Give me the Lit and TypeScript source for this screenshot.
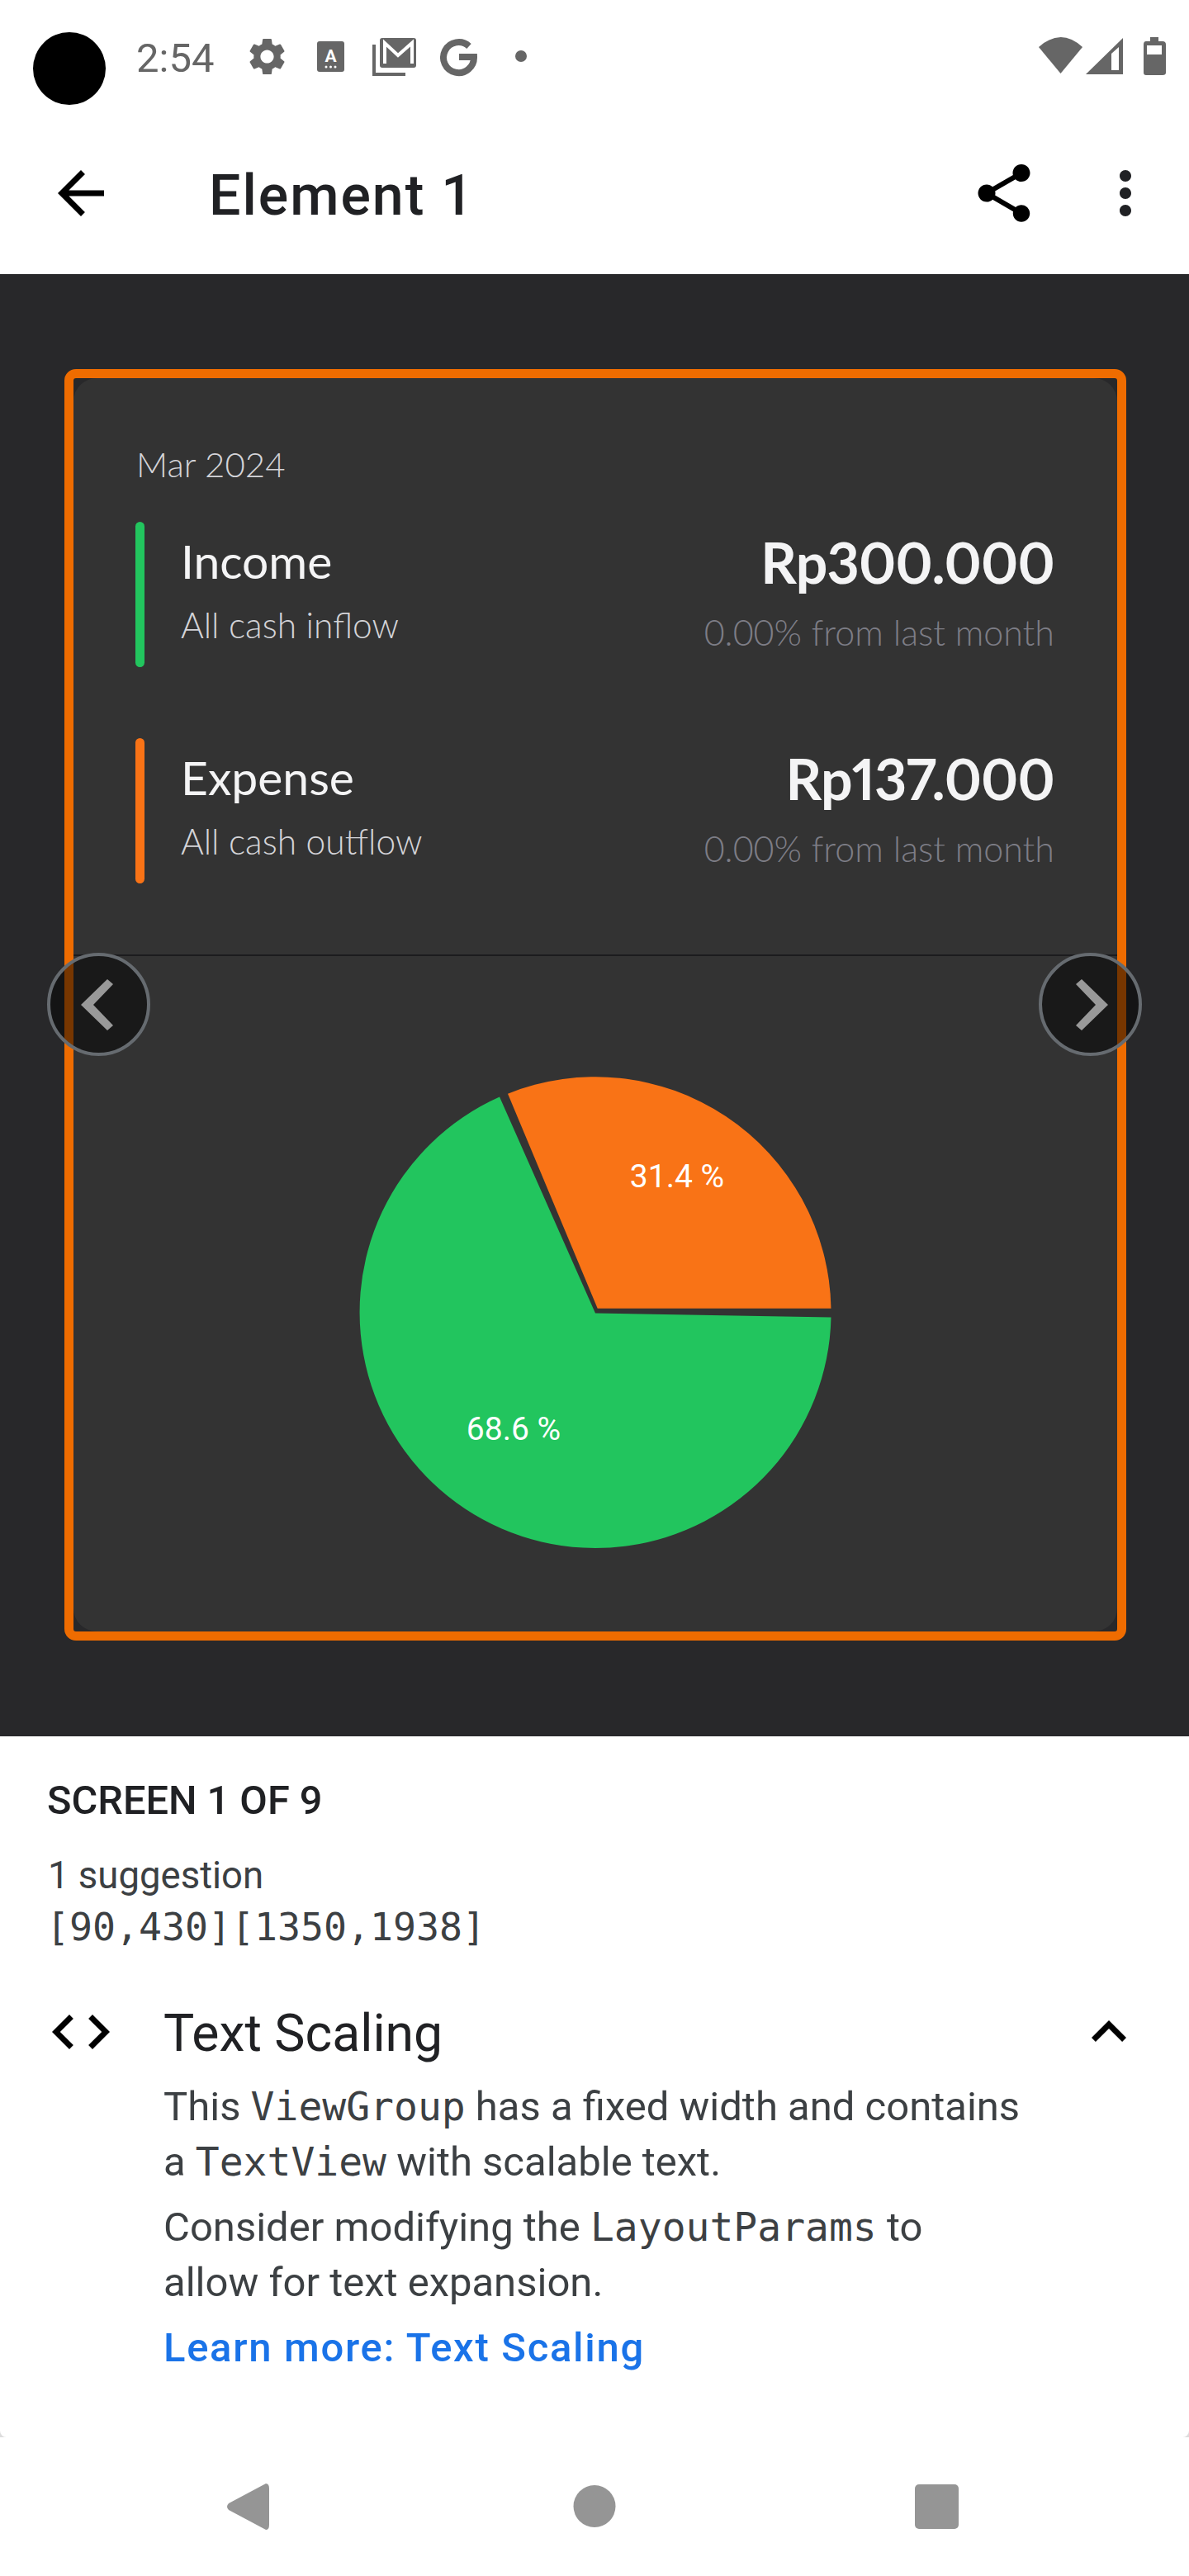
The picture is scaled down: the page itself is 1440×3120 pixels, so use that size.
import { LitElement, html, css, svg } from 'lit';
import { customElement } from 'lit/decorators.js';

const icon = (d: string, cls = '') => html`<svg class="icon ${cls}" viewBox="0 0 24 24"><path d="${d}"></path></svg>`;

const GEAR = 'M19.14 12.94c.04-.3.06-.61.06-.94 0-.32-.02-.64-.07-.94l2.03-1.58c.18-.14.23-.41.12-.61l-1.92-3.32c-.12-.22-.37-.29-.59-.22l-2.39.96c-.5-.38-1.03-.7-1.62-.94l-.36-2.54c-.04-.24-.24-.41-.48-.41h-3.84c-.24 0-.43.17-.47.41l-.36 2.54c-.59.24-1.13.57-1.62.94l-2.39-.96c-.22-.08-.47 0-.59.22L2.74 8.87c-.12.21-.08.47.12.61l2.03 1.58c-.05.3-.09.63-.09.94s.02.64.07.94l-2.03 1.58c-.18.14-.23.41-.12.61l1.92 3.32c.12.22.37.29.59.22l2.39-.96c.5.38 1.03.7 1.62.94l.36 2.54c.05.24.24.41.48.41h3.84c.24 0 .44-.17.47-.41l.36-2.54c.59-.24 1.13-.56 1.62-.94l2.39.96c.22.08.47 0 .59-.22l1.92-3.32c.12-.22.07-.47-.12-.61l-2.01-1.58zM12 15.6c-1.98 0-3.6-1.62-3.6-3.6s1.62-3.6 3.6-3.6 3.6 1.62 3.6 3.6-1.62 3.6-3.6 3.6z';
const BACK = 'M20 11H7.83l5.59-5.59L12 4l-8 8 8 8 1.41-1.41L7.83 13H20v-2z';
const SHARE = 'M18 16.08c-.76 0-1.44.3-1.96.77L8.91 12.7c.05-.23.09-.46.09-.7s-.04-.47-.09-.7l7.05-4.11c.54.5 1.25.81 2.04.81 1.66 0 3-1.34 3-3s-1.34-3-3-3-3 1.34-3 3c0 .24.04.47.09.7L8.04 9.81C7.5 9.31 6.79 9 6 9c-1.66 0-3 1.34-3 3s1.34 3 3 3c.79 0 1.5-.31 2.04-.81l7.12 4.16c-.05.21-.08.43-.08.65 0 1.61 1.31 2.92 2.92 2.92 1.61 0 2.92-1.31 2.92-2.92s-1.31-2.92-2.92-2.92z';
const MORE = 'M12 8c1.1 0 2-.9 2-2s-.9-2-2-2-2 .9-2 2 .9 2 2 2zm0 2c-1.1 0-2 .9-2 2s.9 2 2 2 2-.9 2-2-.9-2-2-2zm0 6c-1.1 0-2 .9-2 2s.9 2 2 2 2-.9 2-2-.9-2-2-2z';
const CODE = 'M9.4 16.6L4.8 12l4.6-4.6L8 6l-6 6 6 6 1.4-1.4zm5.2 0l4.6-4.6-4.6-4.6L16 6l6 6-6 6-1.4-1.4z';
const LESS = 'M12 8l-6 6 1.41 1.41L12 10.83l4.59 4.58L18 14z';

@customElement('app-root')
export class AppRoot extends LitElement {
  static styles = css`
    :host {
      display: block;
      width: 1440px;
      height: 3120px;
      background: #dcdcdc;
      font-family: Roboto, sans-serif;
      overflow: hidden;
    }
    .icon { display: block; width: 84px; height: 84px; fill: currentColor; flex: none; }

    .status { height: 166px; display: flex; align-items: flex-start; box-sizing: border-box; padding: 39px 28px 0 40px; color: #666; background: #fff; }
    .cam { width: 88px; height: 88px; border-radius: 50%; background: #000; flex: none; }
    .time { font-size: 49px; line-height: 56px; margin: 4px 0 0 37px; width: 93px; flex: none; }
    .status svg { flex: none; display: block; }
    .status-left { width: 340px; height: 48px; margin: 6px 0 0 44px; }
    .status-right { width: 154px; height: 48px; margin: 6px 0 0 auto; }

    .bar { height: 166px; display: flex; align-items: flex-start; box-sizing: border-box; padding: 26px 35px 0 56px; color: #000; background: #fff; }
    .title { font-size: 68px; font-weight: 500; line-height: 84px; letter-spacing: 2px; color: #202124; margin: 3px 0 0 113px; flex: 1; }
    .share { margin-right: 63px; }
    .more { color: #202124; }

    .canvas { height: 1771px; background: #28282a; box-sizing: border-box; padding: 115px 76px 0 78px; position: relative; }
    .frame { border: 11px solid #ef6c00; border-radius: 14px; height: 1540px; box-sizing: border-box; }
    .card { height: 100%; background: #333; border-radius: 28px; box-sizing: border-box; padding-top: 79px; color: #f4f4f5; font-family: Lato, sans-serif; overflow: hidden; }
    .month { margin-left: 76px; font-size: 42px; font-weight: 300; line-height: 50px; color: #d4d4d8; }
    .rows { display: flex; flex-direction: column; gap: 86px; margin: 45px 76px 0 75px; }
    .row { display: flex; height: 176px; }
    .stripe { width: 11px; border-radius: 6px; flex: none; }
    .green { background: #22c55e; }
    .orange { background: #f97316; }
    .names { margin-left: 44px; flex: 1; }
    .name { font-size: 57px; line-height: 68px; margin-top: 13px; }
    .sub { font-size: 42.5px; font-weight: 300; line-height: 50px; margin-top: 19px; color: #d4d4d8; }
    .right { text-align: right; }
    .amount { font-size: 68px; font-weight: 700; line-height: 80px; letter-spacing: -0.8px; margin-top: 9px; font-variant-numeric: proportional-nums; }
    .change { font-size: 43px; font-weight: 300; line-height: 50px; margin-top: 20px; color: #7d7d86; }
    .divider { height: 2px; background: #1c1c1e; margin-top: 86px; }
    .pie { display: block; width: 1265px; height: 800px; }
    .pie text { font-family: Roboto, sans-serif; font-size: 39px; fill: #fff; }

    .nav-btn { position: absolute; top: 822px; width: 125px; height: 125px; box-sizing: border-box; border-radius: 50%; border: 4px solid #666b70; background: rgba(0, 0, 0, 0.5); }
    .nav-btn svg { display: block; width: 117px; height: 117px; fill: #999; }
    .prev { left: 57px; }
    .next { left: 1258px; }

    .sheet { height: 849px; box-sizing: border-box; padding: 50px 0 0 58px; border-radius: 0 0 8px 8px; background: #fff; }
    .screen { font-size: 48.7px; line-height: 56px; font-weight: 500; color: #202124; margin-left: -1px; }
    .count { font-size: 45.5px; line-height: 54px; color: #3c4043; margin-top: 36px; }
    .bounds { font-family: 'DejaVu Sans Mono', monospace; font-size: 46.5px; line-height: 58px; color: #3c4043; margin: 6px 0 0 -2px; }
    .finding { display: flex; margin: 56px 0 0 -2px; }
    .finding .code { color: #000; }
    .detail { margin-left: 58px; width: 1040px; }
    .name2 { font-size: 62.5px; line-height: 84px; margin: 2px 0 13px; color: #202124; }
    .detail p { margin: 0 0 12px; font-size: 49px; color: #3c4043; }
    .line { display: block; height: 67px; line-height: 67px; white-space: nowrap; }
    .detail code { font-family: 'DejaVu Sans Mono', monospace; font-size: 48px; line-height: 1; }
    .learn { font-size: 49px; line-height: 67px; letter-spacing: 1.7px; font-weight: 500; color: #1a73e8; text-decoration: none; display: block; }
    .toggle { margin-left: 63px; color: #000; }

    .softkeys { height: 168px; display: block; width: 1440px; background: #fff; }
  `;

  private renderRow(name: string, sub: string, amount: string, color: string) {
    return html`
      <div class="row">
        <div class="stripe ${color}"></div>
        <div class="names">
          <div class="name">${name}</div>
          <div class="sub">${sub}</div>
        </div>
        <div class="right">
          <div class="amount">${amount}</div>
          <div class="change">0.00% from last month</div>
        </div>
      </div>
    `;
  }

  render() {
    return html`
      <div class="status">
        <div class="cam"></div>
        <div class="time">2:54</div>
        <svg class="status-left" viewBox="0 0 340 48" fill="#666">
          <svg x="-5.500" y="-3.500" width="54" height="54" viewBox="0 0 24 24"><path d="${GEAR}"></path></svg>
          <rect x="82" y="5" width="33" height="37" rx="3"></rect>
          <text x="98.500" y="30" text-anchor="middle" font-family="Roboto" font-weight="700" font-size="21" fill="#fff">A</text>
          <g fill="#fff"><circle cx="93" cy="36" r="1.500"></circle><circle cx="98.500" cy="36" r="1.500"></circle><circle cx="104" cy="36" r="1.500"></circle></g>
          <path d="M149 9h4v34h36v4h-40z"></path>
          <rect x="158" y="1" width="44" height="36" rx="3"></rect>
          <path d="M164 32V7l16 15 17-15v25" fill="none" stroke="#fff" stroke-width="4"></path>
          <path d="M266 11A18.500 18.500 0 1 0 272 24H254" fill="none" stroke="#666" stroke-width="8"></path>
          <circle cx="329" cy="23" r="7"></circle>
        </svg>
        <svg class="status-right" viewBox="0 0 154 48" fill="#666">
          <path d="M0 12Q27 -12 53 12L26.500 44Z"></path>
          <path d="M102 1V45H57Z"></path>
          <path d="M88 20L97 12V40H88Z" fill="#fff"></path>
          <path d="M135 0H145V5H150Q154 5 154 9V43Q154 46 150 46H130Q127 46 127 43V9Q127 5 130 5H135Z"></path>
          <rect x="131" y="10" width="18" height="11" fill="#fff"></rect>
        </svg>
      </div>

      <div class="bar">
        ${icon(BACK)}
        <div class="title">Element 1</div>
        ${icon(SHARE, 'share')}
        ${icon(MORE, 'more')}
      </div>

      <div class="canvas">
        <div class="frame">
          <div class="card">
            <div class="month">Mar 2024</div>
            <div class="rows">
              ${this.renderRow('Income', 'All cash inflow', 'Rp300.000', 'green')}
              ${this.renderRow('Expense', 'All cash outflow', 'Rp137.000', 'orange')}
            </div>
            <div class="divider"></div>
            <svg class="pie" viewBox="89 1158 1265 800">
              <path d="M721 1590.500L1006.500 1595.400A285.500 285.500 0 1 1 605 1328.600Z" fill="#22c55e"></path>
              <path d="M723.700 1584.700H1006.500A285.500 285.500 0 0 0 615 1324.700Z" fill="#f97316"></path>
              <text x="820" y="1438" text-anchor="middle">31.4 %</text>
              <text x="622" y="1744" text-anchor="middle">68.6 %</text>
            </svg>
          </div>
        </div>
        <div class="nav-btn prev">
          <svg viewBox="61 1158 117 117"><path d="M130 1186L137 1192L113 1217L137 1242L130 1248L98 1217Z"></path></svg>
        </div>
        <div class="nav-btn next">
          <svg viewBox="1262 1158 117 117"><path d="M1310 1186L1303 1192L1327 1217L1303 1242L1310 1248L1342 1217Z"></path></svg>
        </div>
      </div>

      <div class="sheet">
        <div class="screen">SCREEN 1 OF 9</div>
        <div class="count">1 suggestion</div>
        <div class="bounds">[90,430][1350,1938]</div>
        <div class="finding">
          ${icon(CODE, 'code')}
          <div class="detail">
            <div class="name2">Text Scaling</div>
            <p>
              <span class="line">This <code>ViewGroup</code> has a fixed width and contains</span>
              <span class="line">a <code>TextView</code> with scalable text.</span>
            </p>
            <p>
              <span class="line">Consider modifying the <code>LayoutParams</code> to</span>
              <span class="line">allow for text expansion.</span>
            </p>
            <a class="learn">Learn more: Text Scaling</a>
          </div>
          ${icon(LESS, 'toggle')}
        </div>
      </div>

      <svg class="softkeys" viewBox="0 2952 1440 168" fill="#959595">
        ${svg`<path d="M322 3008Q326 3008 326 3014V3058Q326 3064 322 3064L277 3040Q273 3036 277 3032Z"></path>`}
        ${svg`<circle cx="720" cy="3035.500" r="25.500"></circle>`}
        ${svg`<rect x="1108" y="3009" width="53" height="54" rx="5"></rect>`}
      </svg>
    `;
  }
}
